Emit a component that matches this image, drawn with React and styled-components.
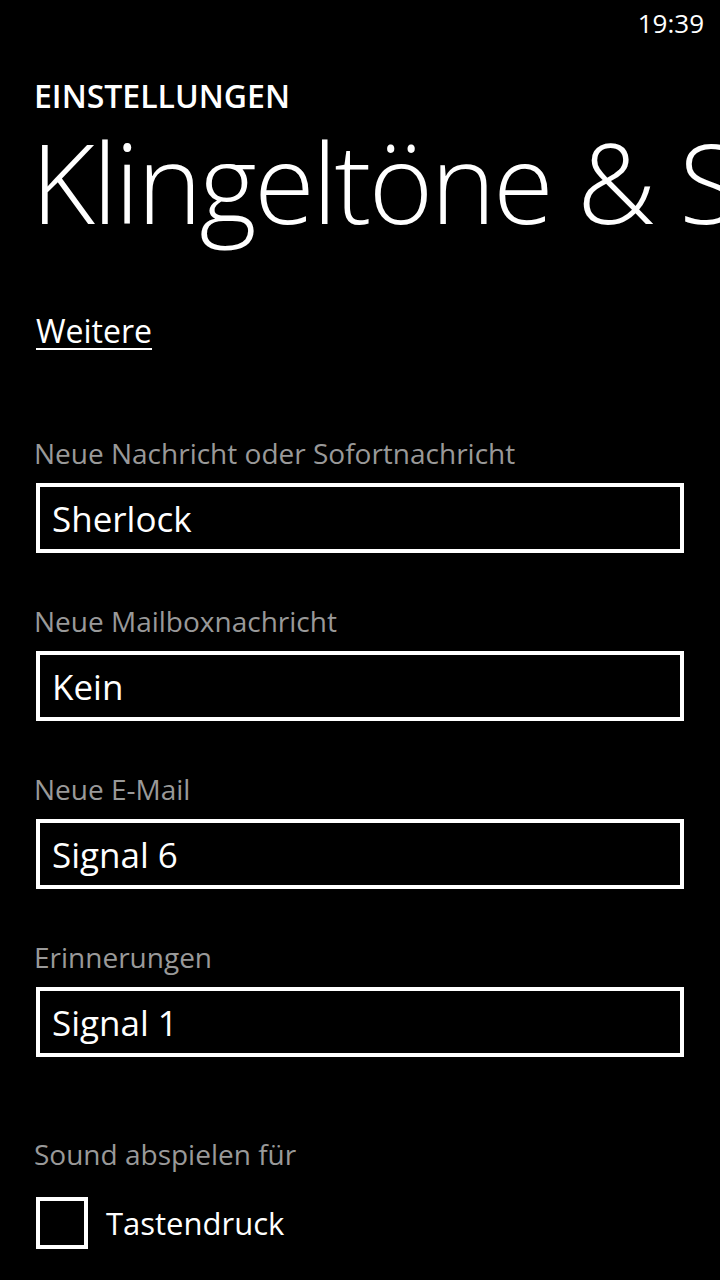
import React from 'react';
import styled, { createGlobalStyle } from 'styled-components';

const GlobalStyle = createGlobalStyle`
  html, body {
    margin: 0;
    padding: 0;
    background: #000;
  }
  body {
    font-family: "Open Sans", "Noto Sans", sans-serif;
    color: #fff;
  }
`;

const Screen = styled.div`
  width: 720px;
  height: 1280px;
  background: #000;
  overflow: hidden;
`;

const StatusBar = styled.div`
  height: 46px;
  display: flex;
  justify-content: flex-end;
  align-items: center;
  padding-right: 16px;
  font-size: 26px;
  font-weight: 400;
`;

const Header = styled.header`
  padding-left: 34px;
  margin-top: 30px;
`;

const AppTitle = styled.div`
  font-size: 32px;
  font-weight: 600;
  line-height: 40px;
`;

const PageTitle = styled.h1`
  margin: 0;
  font-size: 110px;
  font-weight: 300;
  line-height: 130px;
  white-space: nowrap;
  letter-spacing: -2.5px;
  margin-left: -3px;
`;

const Content = styled.main`
  padding: 0 36px;
  margin-top: 65px;
`;

const MoreLink = styled.a`
  display: inline-block;
  color: #fff;
  font-size: 32px;
  line-height: 40px;
  text-decoration: underline;
  text-underline-offset: 5px;
  text-decoration-thickness: 2px;
  margin-bottom: 84px;
`;

const Field = styled.div`
  margin-bottom: 50px;
`;

const Label = styled.div`
  color: #999;
  font-size: 28px;
  line-height: 36px;
  margin-left: -2px;
  margin-bottom: 12px;
`;

const Picker = styled.div`
  box-sizing: border-box;
  width: 648px;
  height: 70px;
  border: 4px solid #fff;
  display: flex;
  align-items: center;
  padding-left: 12px;
  font-size: 35px;
`;

const Section = styled.div`
  margin-top: 79px;
`;

const CheckRow = styled.label`
  display: flex;
  align-items: center;
  gap: 18px;
  margin-top: 25px;
  font-size: 31px;
`;

const Box = styled.span`
  box-sizing: border-box;
  width: 52px;
  height: 52px;
  border: 4px solid #fff;
`;

const fields = [
  { label: 'Neue Nachricht oder Sofortnachricht', value: 'Sherlock' },
  { label: 'Neue Mailboxnachricht', value: 'Kein' },
  { label: 'Neue E-Mail', value: 'Signal 6' },
  { label: 'Erinnerungen', value: 'Signal 1' },
];

export default function App() {
  return (
    <Screen>
      <GlobalStyle />
      <StatusBar>19:39</StatusBar>
      <Header>
        <AppTitle>EINSTELLUNGEN</AppTitle>
        <PageTitle>Klingeltöne &amp; Sounds</PageTitle>
      </Header>
      <Content>
        <MoreLink>Weitere</MoreLink>
        {fields.map((f) => (
          <Field key={f.label}>
            <Label>{f.label}</Label>
            <Picker>{f.value}</Picker>
          </Field>
        ))}
        <Section>
          <Label>Sound abspielen für</Label>
          <CheckRow>
            <Box />
            Tastendruck
          </CheckRow>
        </Section>
      </Content>
    </Screen>
  );
}
